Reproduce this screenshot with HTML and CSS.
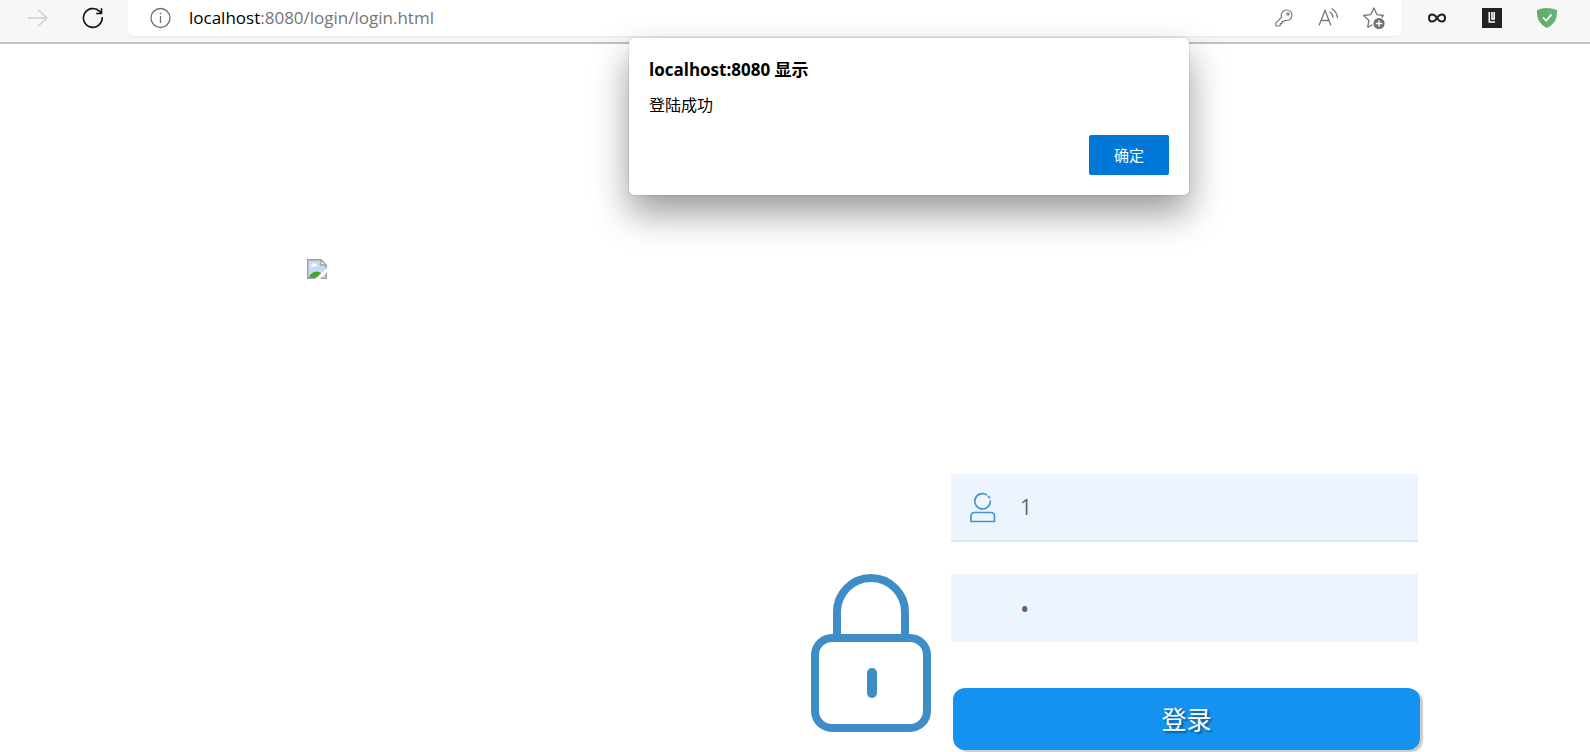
FILE: index.html
```html
<!DOCTYPE html>
<html lang="zh-CN">
<head>
<meta charset="utf-8">
<title>登录</title>
<link rel="stylesheet" href="styles.css">
</head>
<body>
<header class="toolbar">
  <button class="tool forward" type="button" aria-label="前进" disabled>
    <svg width="22" height="22" viewBox="0 0 22 22" fill="none" stroke="#d0d0d0" stroke-width="1.4"><path d="M1 11H20M11 2.5L20 11L11 19.500"/></svg>
  </button>
  <button class="tool reload" type="button" aria-label="刷新">
    <svg width="22" height="22" viewBox="0 0 22 22" fill="none" stroke="#111" stroke-width="1.6"><path d="M20.200 10A9.400 9.400 0 1 1 17.600 4.400L19.500 6.300M19.500 1.200V6.500H14.200"/></svg>
  </button>
  <div class="address">
    <svg width="22" height="22" viewBox="0 0 22 22" fill="none" stroke="#707070" stroke-width="1.300"><circle cx="10.500" cy="11" r="9.500"/><path d="M10.500 9V16"/><circle cx="10.500" cy="6.500" r=".6" fill="#707070" stroke-width=".6"/></svg>
    <p class="url"><span class="host">localhost</span>:8080/login/login.html</p>
    <button class="tool" type="button" aria-label="密码">
      <svg width="20" height="20" viewBox="0 0 20 20" fill="none" stroke="#777" stroke-width="1.200" stroke-linejoin="round"><path d="M7.600 9.200C6.700 5.500 8.500 2 12.500 2C15.600 2 18 4.200 18 7.200C18 11 14.500 13.200 11 12.300L9.700 13.700H8V15.600H6.200V17.500L5.600 18H2V14.800Z"/><circle cx="14" cy="6" r="1.100"/></svg>
    </button>
    <button class="tool" type="button" aria-label="大声朗读">
      <svg width="22" height="22" viewBox="0 0 22 22" fill="none" stroke="#777" stroke-width="1.300"><path d="M2 18.500L8 3.500L14 18.500M4 13.500H12M12.500 4.500Q15.500 6.500 16.200 10.500M14.500 1.500Q19.800 4.500 20.500 11"/></svg>
    </button>
    <button class="tool" type="button" aria-label="添加到收藏夹">
      <svg width="24" height="24" viewBox="0 0 24 24" fill="none" stroke="#777" stroke-width="1.300" stroke-linejoin="round"><path d="M5.600 21.500L7 14.500L1.500 9.500L8.700 8.600L11.800 2L15 8.600L21.500 9.500L19.500 11.500M5.600 21.500L10.500 18.500"/><circle cx="17" cy="17.500" r="5.600" fill="#707070" stroke="none"/><path d="M17 14.300V20.700M13.800 17.500H20.200" stroke="#fff"/></svg>
    </button>
  </div>
  <div class="extensions">
    <button class="tool" type="button" aria-label="Infinity">
      <svg width="20" height="20" viewBox="0 0 20 20" fill="none" stroke="#222" stroke-width="2"><path d="M10 10C7 5 2 5.500 2 10S7 15 10 10S18 5.500 18 10S13 15 10 10Z"/></svg>
    </button>
    <button class="tool" type="button" aria-label="扩展">
      <svg width="20" height="20" viewBox="0 0 20 20"><path fill="#222" d="M0 0H20V20H0Z"/><path d="M7.300 4V14H13M10 4V11H12.200V4" fill="none" stroke="#fff" stroke-width="1.600"/></svg>
    </button>
    <button class="tool" type="button" aria-label="AdGuard">
      <svg width="20" height="20" viewBox="0 0 20 20"><path fill="#67b279" d="M10 0C13 0 17 .7 20 2.200C20 9 19.500 15 10 20Z"/><path fill="#5fae6b" d="M10 0C7 0 3 .7 0 2.200C0 9 .5 15 10 20Z"/><path d="M6 9.500L9.200 12.700L14.500 6.500" fill="none" stroke="#fff" stroke-width="1.700"/></svg>
    </button>
  </div>
</header>

<main class="page">
  <svg class="missing" width="20" height="20" viewBox="0 0 20 20" role="img" aria-label="图片">
    <path fill="#c6d9f5" d="M.7 .7H14L19.300 6V19.300H.7Z"/>
    <path fill="#fff" d="M3.500 7.500Q3.500 5.500 5.500 5.500Q6.500 3 8.500 5Q10.500 5 10.500 7.500ZM14 1.500V6H18.500Z"/>
    <path fill="#42a52c" d="M1.500 19Q4 12.500 10 12.500Q13 12.500 15 15V19Z"/>
    <path fill="none" stroke="#a0a0a0" stroke-width="1.400" d="M14 .7V6H19.300M.7 .7H14L19.300 6V19.300H.7Z"/>
    <path fill="#fff" d="M8 20L20 9V13L13 20Z"/>
  </svg>
  <form class="login">
    <label class="field">
      <svg width="26" height="32" viewBox="0 0 26 32" fill="none" stroke="#4596cf" stroke-width="1.700" role="img" aria-label="用户名"><path d="M20.200 9.500A7.700 7.700 0 1 1 17 4M18 5Q19.500 6.200 19.900 7.500M1 30.500V25Q1 21.500 5 21.500H20.500Q24.500 21.500 24.500 25V30.500Z"/></svg>
      <input type="text" value="1">
    </label>
    <svg class="lock" viewBox="0 0 120 158" fill="none" stroke="#3e8dc6" stroke-width="8" aria-hidden="true"><rect x="4" y="64" width="112" height="90" rx="17"/><path d="M26 64V38A34 34 0 0 1 94 38V64"/><path d="M61 99V119" stroke-width="10" stroke-linecap="round"/></svg>
    <div class="field password">
      <input type="password" value="1" aria-label="密码">
    </div>
    <button class="submit" type="button">登录</button>
  </form>
</main>

<section class="dialog" role="alertdialog" aria-labelledby="dialog-title" aria-describedby="dialog-message">
  <h1 class="dialog-title" id="dialog-title">localhost:8080 显示</h1>
  <p class="dialog-message" id="dialog-message">登陆成功</p>
  <button class="confirm" type="button">确定</button>
</section>
</body>
</html>
```

FILE: styles.css
```css
* {
  box-sizing: border-box;
}

body {
  margin: 0;
  background: #fff;
  font-family: "Open Sans", "Noto Sans CJK SC", sans-serif;
  color: #000;
}

button,
input {
  font: inherit;
}

svg {
  display: block;
  flex: none;
}

.toolbar {
  display: flex;
  align-items: flex-start;
  height: 44px;
  padding-left: 27px;
  background: #f7f7f7;
  border-bottom: 2px solid #bfbfbf;
}

.tool {
  display: flex;
  align-items: center;
  height: 36px;
  padding: 0;
  border: 0;
  background: none;
}

.reload {
  margin: 0 24px 0 33px;
}

.address {
  display: flex;
  flex: 1;
  align-items: center;
  gap: 23px;
  height: 36px;
  padding: 0 16px 0 22px;
  background: #fff;
  border-radius: 0 0 6px 6px;
  box-shadow: 0 1px 2px #00000010;
}

.url {
  flex: 1;
  margin: 0 0 0 -6px;
  font-size: 17px;
  line-height: 34px;
  color: #767676;
}

.host {
  color: #000;
}

.extensions {
  display: flex;
  gap: 35px;
  padding: 0 33px 0 25px;
}

.page {
  padding: 215px 172px 0 307px;
}

.login {
  display: grid;
  grid-template-columns: 120px minmax(0, 467px);
  column-gap: 20px;
  justify-content: end;
  margin-top: 195px;
}

.field {
  display: flex;
  grid-column: 2;
  align-items: center;
  gap: 24px;
  height: 68px;
  padding-left: 19px;
  background: #ecf5fd;
  border-bottom: 2px solid #d6e7f8;
}

.field input {
  flex: 1;
  min-width: 0;
  height: 60px;
  padding: 0;
  border: 0;
  outline: 0;
  background: none;
  font-size: 21px;
  color: #666;
}

.password {
  margin-top: 32px;
  padding-left: 69px;
  border-bottom: 0;
}

.password input {
  font-size: 25px;
}

.lock {
  grid-column: 1;
  grid-row: 2 / 4;
  width: 120px;
  margin-top: 32px;
}

.submit {
  grid-column: 2;
  height: 62px;
  margin: 46px -2px 2px 2px;
  padding: 0 0 2px;
  border: 0;
  border-radius: 12px;
  background: #1591f0;
  box-shadow: 3px 2px 1px #ccc;
  font-size: 25px;
  color: #fff;
  text-shadow: 2px 2px 2px #0006;
}

.dialog {
  position: absolute;
  top: 38px;
  left: calc(50% - 166px);
  display: flex;
  flex-direction: column;
  width: 560px;
  padding: 20px;
  background: #fff;
  border-radius: 5px;
  box-shadow: 0 0 2px #0004, 0 18px 36px #0006;
}

.dialog-title {
  margin: 0;
  font-size: 17px;
  line-height: 24px;
}

.dialog-message {
  margin: 11px 0 18px;
  font-size: 16px;
  line-height: 24px;
}

.confirm {
  align-self: flex-end;
  width: 80px;
  height: 40px;
  padding: 0 0 2px;
  border: 0;
  border-radius: 2px;
  background: #0078d7;
  font-size: 15px;
  color: #fff;
}
```
